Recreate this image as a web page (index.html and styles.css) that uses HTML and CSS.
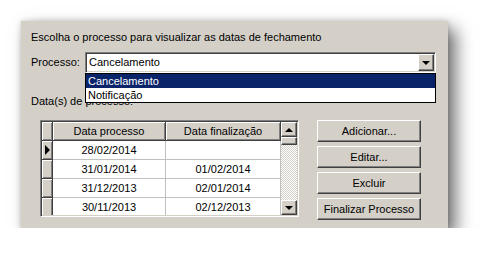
FILE: index.html
```html
<!DOCTYPE html>
<html>
<head>
<meta charset="utf-8">
<link rel="stylesheet" href="styles.css">
</head>
<body>
<div class="panel">
  <div class="heading">Escolha o processo para visualizar as datas de fechamento</div>
  <div class="combo-row">
    <span class="label">Processo:</span>
    <div class="combo">
      <div class="combo-text">Cancelamento</div>
      <div class="raised combo-btn"><span class="arrow-down"></span></div>
      <ul class="dropdown">
        <li class="selected">Cancelamento</li>
        <li>Notificação</li>
      </ul>
    </div>
  </div>
  <div class="label2">Data(s) de processo:</div>
  <div class="bottom">
    <div class="grid">
      <div class="table">
        <div class="hcell"></div>
        <div class="hcell">Data processo</div>
        <div class="hcell">Data finalização</div>

        <div class="ind"><span class="arrow-right"></span></div>
        <div class="cell">28/02/2014</div>
        <div class="cell"></div>

        <div class="ind"></div>
        <div class="cell">31/01/2014</div>
        <div class="cell">01/02/2014</div>

        <div class="ind"></div>
        <div class="cell">31/12/2013</div>
        <div class="cell">02/01/2014</div>

        <div class="ind"></div>
        <div class="cell">30/11/2013</div>
        <div class="cell">02/12/2013</div>
      </div>
      <div class="scrollbar">
        <div class="raised sb-btn"><span class="arrow-up"></span></div>
        <div class="raised thumb"></div>
        <div class="track"></div>
        <div class="raised sb-btn"><span class="arrow-down"></span></div>
      </div>
    </div>
    <div class="buttons">
      <button class="btn">Adicionar...</button>
      <button class="btn">Editar...</button>
      <button class="btn">Excluir</button>
      <button class="btn">Finalizar Processo</button>
    </div>
  </div>
</div>
</body>
</html>
```

FILE: styles.css
```css
html, body {
  margin: 0;
  background: #fff;
}
body {
  padding: 21px 0 0 21px;
  font: 11px "Liberation Sans", Arial, sans-serif;
  color: #000;
}
.panel {
  width: 427px;
  height: 207px;
  box-sizing: border-box;
  background: #d4d0c8;
  padding: 10px 10px 0 10px;
  box-shadow: 8px 8px 16px rgba(0, 0, 0, 0.55), 0 0 6px rgba(0, 0, 0, 0.18);
}
.heading {
  line-height: 13px;
  white-space: nowrap;
}
.combo-row {
  display: flex;
  align-items: center;
  margin-top: 8px;
  line-height: 13px;
}
.label {
  width: 54px;
  flex: none;
}
.combo {
  position: relative;
  width: 351px;
  height: 21px;
  box-sizing: border-box;
  background: #fff;
  border: 1px solid;
  border-color: #808080 #fff #fff #808080;
  box-shadow: inset 1px 1px #404040, inset -1px -1px #d4d0c8;
  display: flex;
  align-items: center;
}
.combo-text {
  flex: 1;
  padding-left: 3px;
}
.raised {
  box-sizing: border-box;
  background: #d4d0c8;
  border: 1px solid;
  border-color: #fff #404040 #404040 #fff;
  box-shadow: inset -1px -1px #808080;
  display: flex;
  align-items: center;
  justify-content: center;
}
.combo-btn {
  width: 16px;
  height: 17px;
  margin-right: 1px;
}
.arrow-down {
  width: 0;
  height: 0;
  border-left: 4px solid transparent;
  border-right: 4px solid transparent;
  border-top: 4px solid #000;
}
.arrow-up {
  width: 0;
  height: 0;
  border-left: 4px solid transparent;
  border-right: 4px solid transparent;
  border-bottom: 4px solid #000;
}
.arrow-right {
  width: 0;
  height: 0;
  border-top: 5px solid transparent;
  border-bottom: 5px solid transparent;
  border-left: 5px solid #000;
}
.dropdown {
  position: absolute;
  left: -1px;
  top: 20px;
  width: 351px;
  box-sizing: border-box;
  margin: 0;
  padding: 0;
  list-style: none;
  background: #fff;
  border: 1px solid #000;
  z-index: 5;
}
.dropdown li {
  height: 14px;
  line-height: 14px;
  padding-left: 2px;
}
.dropdown li.selected {
  background: #0a246a;
  color: #fff;
}
.label2 {
  margin-top: 22px;
  line-height: 13px;
}
.bottom {
  display: flex;
  gap: 18px;
  margin-top: 12px;
  padding-left: 9px;
}
.grid {
  width: 259px;
  height: 97px;
  box-sizing: border-box;
  background: #fff;
  border: 1px solid;
  border-color: #808080 #fff #fff #808080;
  display: flex;
  padding: 1px;
  box-shadow: inset 1px 1px #404040, inset -1px -1px #d4d0c8;
}
.table {
  width: 239px;
  height: 93px;
  overflow: hidden;
  display: grid;
  grid-template-columns: 11px 113px 115px;
  grid-auto-rows: 19px;
  line-height: 18px;
}
.hcell, .ind {
  box-sizing: border-box;
  background: #d4d0c8;
  border-right: 1px solid #404040;
  border-bottom: 1px solid #404040;
  box-shadow: inset 1px 1px #fff, inset -1px -1px #808080;
  text-align: center;
  white-space: nowrap;
  overflow: hidden;
}
.ind {
  display: flex;
  align-items: center;
  padding-left: 3px;
}
.cell {
  box-sizing: border-box;
  border-right: 1px solid #c0c0c0;
  border-bottom: 1px solid #c0c0c0;
  text-align: center;
}
.scrollbar {
  width: 16px;
  height: 93px;
  display: flex;
  flex-direction: column;
  background: repeating-conic-gradient(#d4d0c8 0 25%, #fff 0 50%) 0 0 / 2px 2px;
}
.sb-btn {
  width: 16px;
  height: 15px;
  flex: none;
}
.thumb {
  width: 16px;
  height: 8px;
  flex: none;
}
.track {
  flex: 1;
}
.buttons {
  display: flex;
  flex-direction: column;
  gap: 4px;
}
.btn {
  width: 104px;
  height: 22px;
  box-sizing: border-box;
  margin: 0;
  padding: 0;
  font: inherit;
  color: #000;
  background: #d4d0c8;
  border: 1px solid;
  border-color: #fff #404040 #404040 #fff;
  box-shadow: inset -1px -1px #808080;
  border-radius: 0;
  text-align: center;
}
```
